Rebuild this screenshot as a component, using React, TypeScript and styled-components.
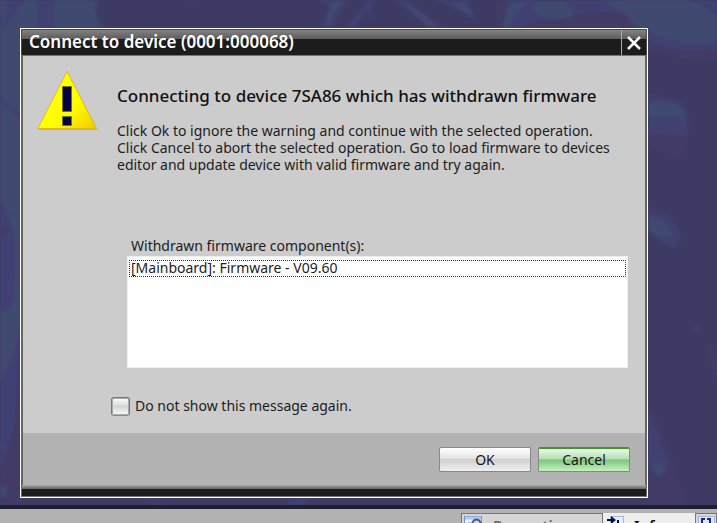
import React, { useState } from "react";
import styled, { createGlobalStyle } from "styled-components";

const GlobalStyle = createGlobalStyle`
  *, *::before, *::after { box-sizing: border-box; }
  body {
    margin: 0;
    overflow: hidden;
    background: #3d3b63;
    font-family: "Noto Sans", "Open Sans", sans-serif;
    font-size: 14px;
    color: #1c1c1c;
  }
`;

const Screen = styled.div`
  height: 100vh;
  display: grid;
  grid-template-rows: minmax(0, 1fr) 18px;
  overflow: hidden;
`;

const Desktop = styled.main`
  position: relative;
  padding: 28px 69px 7px 20px;
  background: #3d3b63;
`;

const Wallpaper = styled.svg`
  position: absolute;
  inset: 0;
  width: 100%;
  height: 100%;
`;

const Dialog = styled.section`
  position: relative;
  height: 100%;
  display: flex;
  flex-direction: column;
  border: 1px solid #fff;
  background: #666;
`;

const TitleBar = styled.header`
  display: flex;
  height: 27px;
  border: 1px solid #4a4a4a;
  border-bottom-color: #777;
  background: linear-gradient(#828282 0, #5c5c5c 9px, #1c1c1c 9px);
`;

const Title = styled.h1`
  flex: 1;
  margin: 0;
  padding-left: 7px;
  font-size: 17px;
  line-height: 24px;
  font-weight: 600;
  color: #fff;
`;

const CloseButton = styled.button`
  width: 25px;
  padding: 0;
  border: 0;
  border-left: 1px solid #aaa;
  background: transparent;
  display: flex;
  align-items: center;
  justify-content: center;
`;

const Content = styled.div`
  flex: 1;
  margin: 0 2px;
  padding: 14px 17px 0 14px;
  display: grid;
  grid-template-columns: 62px minmax(0, 1fr);
  grid-template-rows: 167px 1fr;
  column-gap: 18px;
  background: #ccc;
`;

const Heading = styled.h2`
  margin: 16px 0;
  font-size: 17px;
  line-height: 20px;
  font-weight: 500;
  color: #111;
`;

const Message = styled.p`
  margin: 0;
  line-height: 17px;
  white-space: nowrap;
`;

const Details = styled.div`
  grid-column: 1 / -1;
  display: flex;
  flex-direction: column;
  align-items: stretch;
  padding-left: 74px;
`;

const ListLabel = styled.label`
  padding-left: 20px;
  line-height: 17px;
  margin-bottom: 2px;
`;

const ComponentList = styled.ul`
  height: 112px;
  margin: 0 0 28px 16px;
  padding: 3px 1px 0 1px;
  border: 1px solid #eee;
  background: #fff;
  list-style: none;
`;

const ComponentItem = styled.li`
  height: 17px;
  padding-left: 1px;
  line-height: 14px;
  border: 1px dotted #303048;
`;

const CheckLabel = styled.label`
  display: flex;
  align-items: center;
  gap: 5px;
  line-height: 20px;
`;

const CheckBox = styled.input`
  appearance: none;
  width: 19px;
  height: 19px;
  margin: 0;
  border: 1px solid #777;
  border-bottom-color: #8c8c8c;
  border-radius: 3px;
  box-shadow: inset 0 0 0 1px #aaa;
  background: linear-gradient(#fff, #d4d5d6 50%, #fafafa);
  &:checked { background: #505060; }
`;

const Footer = styled.footer`
  height: 52px;
  margin: 0 2px;
  padding: 14px 15px 0 0;
  display: flex;
  justify-content: flex-end;
  gap: 7px;
  background: #b2b2b2;
`;

const PushButton = styled.button<{ $primary?: boolean }>`
  width: 92px;
  height: 25px;
  padding: 0;
  border: 1px solid ${(p) => (p.$primary ? "#858985" : "#888")};
  border-top: ${(p) => (p.$primary ? "2px solid #3c9a2a" : "1px solid #888")};
  border-radius: 2px;
  font: inherit;
  line-height: 20px;
  color: #151515;
  background: ${(p) =>
    p.$primary
      ? "linear-gradient(#eef8ec, #b4dfb0 45%, #7cc77a 50%, #c8efc0)"
      : "linear-gradient(#fff, #e4e4e4 45%, #d0d0d0 50%, #f0f0f0)"};
`;

const BottomEdge = styled.div`
  height: 12px;
  margin: 0 1px;
  border-bottom: 1px solid #777;
  background: linear-gradient(#aaa 0, #606060 4px, #1c1c1c 4px);
`;

const Inspector = styled.nav`
  display: flex;
  justify-content: flex-end;
  padding-top: 4px;
  border-top: 4px solid #1c2030;
  background: #b2b2b2;
  overflow: hidden;
`;

const Tab = styled.button<{ $width: number; $active?: boolean }>`
  width: ${(p) => p.$width}px;
  height: 24px;
  flex: none;
  display: flex;
  align-items: flex-start;
  gap: 9px;
  padding: 2px 2px 0;
  border: 1px solid ${(p) => (p.$active ? "#eee" : "#777")};
  border-width: 1px 1px 0;
  background: ${(p) => (p.$active ? "#eee" : "#d6d6d6")};
  color: ${(p) => (p.$active ? "#111" : "#666")};
  font-family: inherit;
  font-size: 15px;
  line-height: 18px;
  font-weight: 600;
  white-space: nowrap;
  overflow: hidden;
`;

const TabIcon = styled.svg`
  flex: none;
`;

function WallpaperArt() {
  return (
    <Wallpaper viewBox="0 0 717 505" preserveAspectRatio="none" aria-hidden="true">
      <defs>
        <filter id="soft" x="0" y="0" width="1" height="1">
          <feGaussianBlur stdDeviation="1.5" />
        </filter>
      </defs>
      <g filter="url(#soft)">
        <rect width="717" height="505" fill="#3d3b63" />
        <g fill="#433a65">
          <path d="M0 0H102Q92 16 108 28H24V505H0Z" />
          <path d="M190 0H195L193 10ZM272 0H276L274 6ZM320 28L337 0H352L332 28ZM420 8L448 28H436L415 5ZM498 0H507V28H496Z" />
          <path d="M507 28V0H717V58Q685 64 648 47V28Z" />
          <path d="M645 94Q684 92 690 116Q692 145 676 160L648 143ZM648 207Q676 208 682 242Q672 254 648 234Z" />
          <path d="M648 402Q664 434 673 462L686 505H648ZM704 346L711 344L717 362V378L709 360ZM694 323L700 325L702 334L695 331Z" />
        </g>
        <g fill="#403f72">
          <path d="M0 0H99Q91 16 106 28H24V320Q18 350 17 400Q14 440 0 470Z" />
          <path d="M318 0H348L332 28H321L330 6ZM345 28L362 8L368 0H373L372 22L366 10L356 28ZM394 0L430 28H444L403 0ZM436 0Q468 16 476 20L468 0Z" />
          <path d="M501 28L507 0H717V48Q680 58 648 40V28H636L625 14Q565 8 545 28Z" />
          <path d="M648 98Q680 96 684 107Q691 125 686 136Q676 139 670 134Q655 133 648 137ZM648 212Q670 211 679 230Q679 247 674 248Q662 244 648 231ZM694 326H699V332H694ZM714 370L717 373V380Z" />
          <path d="M648 414L660 435Q658 445 666 454Q670 467 665 474Q657 478 648 468ZM666 480L673 486L668 489ZM0 486H8V498H0ZM142 498L156 505H166L148 498ZM290 498L286 505H302L312 498Z" />
        </g>
        <g fill="#3f496f">
          <path d="M0 0H6L3 28L20 8L26 0H37L38 28H24V116L0 97ZM55 0H97Q91 15 103 28H54ZM0 100L20 120V325Q13 360 0 380V310Q14 320 15 282Q20 220 0 202Z" />
          <path d="M333 2H344L334 12L328 28L326 16ZM401 0L428 28H440L410 4ZM454 4L474 18L465 3ZM502 28L510 4H528Q512 14 510 28Z" />
          <path d="M536 2H563Q578 12 571 18Q546 22 534 12ZM602 0H690L717 15V40Q682 48 648 31V28H636L624 12Z" />
          <path d="M648 104Q678 99 682 111L687 120Q672 118 665 116H648ZM648 217Q664 217 673 236L660 238L648 229ZM651 466L660 462L665 472L657 477Z" />
          <path d="M0 440L5 446L0 451ZM0 484L6 488L5 494H0Z" />
        </g>
        <path d="M0 227H9V232H0ZM520 28L540 20H570L610 14L628 28Z" fill="#433a65" />
        <path d="M0 98L20 119" stroke="#403f72" strokeWidth="3" />
      </g>
    </Wallpaper>
  );
}

function WarningIcon() {
  return (
    <svg width="62" height="62" viewBox="0 0 62 62" role="img" aria-label="Warning">
      <defs>
        <linearGradient id="warning" x1="0" y1="0" x2="1" y2="1">
          <stop offset="0.6" stopColor="#ffff00" />
          <stop offset="1" stopColor="#efc900" />
        </linearGradient>
      </defs>
      <path d="M30 2L61 60H2Z" fill="#b0b0b0" />
      <path d="M30 1.5L59.5 58.5H.8Z" fill="url(#warning)" stroke="#e5b920" />
      <path d="M25.5 16.5H34.5V41.5H25.5ZM25.5 46.5H34.5V55.5H25.5Z" fill="#050044" stroke="#77720b" />
    </svg>
  );
}

function PropertiesIcon() {
  return (
    <TabIcon width="20" height="18" viewBox="0 0 20 18">
      <rect x=".5" y=".5" width="17" height="17" fill="#e9efff" stroke="#7893d2" />
      <path d="M1 2H17" stroke="#b3c8ef" strokeWidth="3" />
      <path d="M4 7H9M4 10H8" stroke="#8290b2" />
      <circle cx="12.5" cy="7.5" r="4" fill="#cdd5df" stroke="#515874" strokeWidth="2" />
    </TabIcon>
  );
}

function InfoIcon() {
  return (
    <TabIcon width="19" height="18" viewBox="0 0 19 18">
      <rect x="4.5" y=".5" width="13" height="17" fill="#e8eeff" stroke="#a7b9e3" />
      <path d="M1 4H7M12 4V14" stroke="#090a45" strokeWidth="2" fill="none" />
      <path d="M5 0L10 4L5 8Z" fill="#090a45" />
    </TabIcon>
  );
}

function DiagnosticsIcon() {
  return (
    <TabIcon width="18" height="18" viewBox="0 0 18 18">
      <rect x=".5" y=".5" width="16" height="17" fill="#dce5ff" stroke="#a2b5e2" />
      <path d="M7 3H4V13M9 3H12V13" stroke="#242a55" strokeWidth="2" fill="none" />
    </TabIcon>
  );
}

export default function App() {
  const [suppressed, setSuppressed] = useState(false);
  return (
    <>
      <GlobalStyle />
      <Screen>
        <Desktop>
          <WallpaperArt />
          <Dialog role="dialog" aria-labelledby="dialog-title">
            <TitleBar>
              <Title id="dialog-title">Connect to device (0001:000068)</Title>
              <CloseButton aria-label="Close">
                <svg width="16" height="16" viewBox="0 0 16 16">
                  <path d="M2 2L14 14M14 2L2 14" stroke="#fff" strokeWidth="2.5" />
                </svg>
              </CloseButton>
            </TitleBar>
            <Content>
              <WarningIcon />
              <div>
                <Heading>Connecting to device 7SA86 which has withdrawn firmware</Heading>
                <Message>
                  Click Ok to ignore the warning and continue with the selected operation.
                  <br />
                  Click Cancel to abort the selected operation. Go to load firmware to devices
                  <br />
                  editor and update device with valid firmware and try again.
                </Message>
              </div>
              <Details>
                <ListLabel id="component-label">Withdrawn firmware component(s):</ListLabel>
                <ComponentList role="listbox" aria-labelledby="component-label">
                  <ComponentItem role="option" aria-selected="false" tabIndex={0}>
                    [Mainboard]: Firmware - V09.60
                  </ComponentItem>
                </ComponentList>
                <CheckLabel>
                  <CheckBox
                    type="checkbox"
                    checked={suppressed}
                    onChange={(event) => setSuppressed(event.target.checked)}
                  />
                  Do not show this message again.
                </CheckLabel>
              </Details>
            </Content>
            <Footer>
              <PushButton>OK</PushButton>
              <PushButton $primary>Cancel</PushButton>
            </Footer>
            <BottomEdge />
          </Dialog>
        </Desktop>
        <Inspector aria-label="Inspector">
          <Tab $width={142}><PropertiesIcon />Properties</Tab>
          <Tab $width={92} $active><InfoIcon />Info</Tab>
          <Tab $width={22} aria-label="Diagnostics"><DiagnosticsIcon /></Tab>
        </Inspector>
      </Screen>
    </>
  );
}
